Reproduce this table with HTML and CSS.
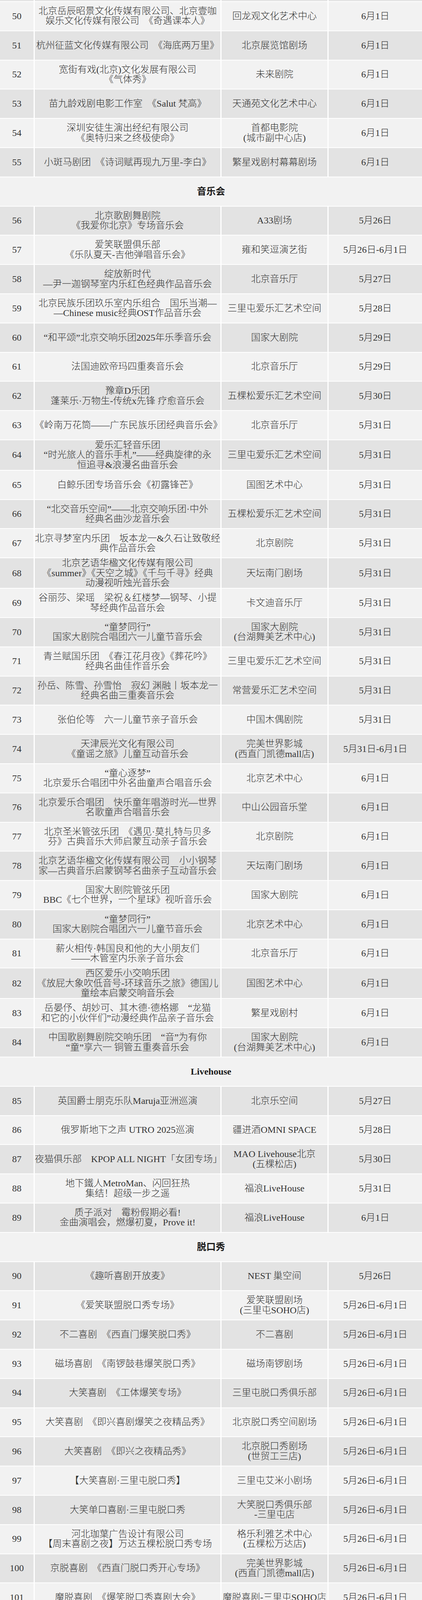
FILE: index.html
```html
<!DOCTYPE html>
<html lang="zh-CN">
<head>
<meta charset="utf-8">
<title>演出安排</title>
<link rel="stylesheet" href="styles.css">
</head>
<body>
<table class="sched">
<colgroup><col class="c1"><col class="c2"><col class="c3"><col class="c4"></colgroup>
<tbody>
<tr class="stub b"><td></td><td></td><td></td><td></td></tr>
<tr class="a"><td>50</td><td>北京岳辰昭景文化传媒有限公司、北京壹咖<br>娱乐文化传媒有限公司　《奇遇课本人》</td><td>回龙观文化艺术中心</td><td>6月1日</td></tr>
<tr class="b"><td>51</td><td>杭州征蓝文化传媒有限公司&ensp;《海底两万里》</td><td>北京展览馆剧场</td><td>6月1日</td></tr>
<tr class="a"><td>52</td><td>宽街有戏(北京)文化发展有限公司<br>《气体秀》</td><td>未来剧院</td><td>6月1日</td></tr>
<tr class="b"><td>53</td><td>苗九龄戏剧电影工作室　《Salut 梵高》</td><td>天通苑文化艺术中心</td><td>6月1日</td></tr>
<tr class="a"><td>54</td><td>深圳安徒生演出经纪有限公司<br>《奥特归来之终极使命》</td><td>首都电影院<br>(城市副中心店)</td><td>6月1日</td></tr>
<tr class="b"><td>55</td><td>小斑马剧团　《诗词赋再现九万里-李白》</td><td>繁星戏剧村幕幕剧场</td><td>6月1日</td></tr>
<tr class="sec"><td colspan="4">音乐会</td></tr>
<tr class="b"><td>56</td><td>北京歌剧舞剧院<br>《我爱你北京》专场音乐会</td><td>A33剧场</td><td>5月26日</td></tr>
<tr class="a"><td>57</td><td>爱笑联盟俱乐部<br>《乐队夏天-吉他弹唱音乐会》</td><td>雍和笑逗演艺街</td><td>5月26日-6月1日</td></tr>
<tr class="b"><td>58</td><td>绽放新时代<br>—尹一迦钢琴室内乐红色经典作品音乐会</td><td>北京音乐厅</td><td>5月27日</td></tr>
<tr class="a"><td>59</td><td>北京民族乐团玖乐室内乐组合　国乐当潮—<br>—Chinese music经典OST作品音乐会</td><td>三里屯爱乐汇艺术空间</td><td>5月28日</td></tr>
<tr class="b"><td>60</td><td>“和平颂”北京交响乐团2025年乐季音乐会</td><td>国家大剧院</td><td>5月29日</td></tr>
<tr class="a"><td>61</td><td>法国迪欧帝玛四重奏音乐会</td><td>北京音乐厅</td><td>5月29日</td></tr>
<tr class="b"><td>62</td><td>豫章D乐团<br>蓬莱乐·万物生-传统x先锋 疗愈音乐会</td><td>五棵松爱乐汇艺术空间</td><td>5月30日</td></tr>
<tr class="a"><td>63</td><td>《岭南万花筒——广东民族乐团经典音乐会》</td><td>北京音乐厅</td><td>5月31日</td></tr>
<tr class="b"><td>64</td><td>爱乐汇轻音乐团<br>“时光旅人的音乐手札”——经典旋律的永<br>恒追寻&amp;浪漫名曲音乐会</td><td>三里屯爱乐汇艺术空间</td><td>5月31日</td></tr>
<tr class="a"><td>65</td><td>白鲸乐团专场音乐会《初露锋芒》</td><td>国图艺术中心</td><td>5月31日</td></tr>
<tr class="b"><td>66</td><td>“北交音乐空间”——北京交响乐团·中外<br>经典名曲沙龙音乐会</td><td>五棵松爱乐汇艺术空间</td><td>5月31日</td></tr>
<tr class="a"><td>67</td><td>北京寻梦室内乐团　坂本龙一&amp;久石让致敬经<br>典作品音乐会</td><td>北京剧院</td><td>5月31日</td></tr>
<tr class="b"><td>68</td><td>北京艺语华楹文化传媒有限公司<br>《summer》《天空之城》《千与千寻》经典<br>动漫视听烛光音乐会</td><td>天坛南门剧场</td><td>5月31日</td></tr>
<tr class="a"><td>69</td><td>谷丽莎、梁瑶　梁祝＆红楼梦—钢琴、小提<br>琴经典作品音乐会</td><td>卡文迪音乐厅</td><td>5月31日</td></tr>
<tr class="b"><td>70</td><td>“童梦同行”<br>国家大剧院合唱团六一儿童节音乐会</td><td>国家大剧院<br>(台湖舞美艺术中心)</td><td>5月31日</td></tr>
<tr class="a"><td>71</td><td>青兰赋国乐团　《春江花月夜》《葬花吟》<br>经典名曲佳作音乐会</td><td>三里屯爱乐汇艺术空间</td><td>5月31日</td></tr>
<tr class="b"><td>72</td><td>孙岳、陈雪、孙雪怡　寂幻 渊融丨坂本龙一<br>经典名曲三重奏音乐会</td><td>常营爱乐汇艺术空间</td><td>5月31日</td></tr>
<tr class="a"><td>73</td><td>张伯伦等　六一儿童节亲子音乐会</td><td>中国木偶剧院</td><td>5月31日</td></tr>
<tr class="b"><td>74</td><td>天津辰光文化有限公司<br>《童谣之旅》儿童互动音乐会</td><td>完美世界影城<br>(西直门凯德mall店)</td><td>5月31日-6月1日</td></tr>
<tr class="a"><td>75</td><td>“童心逐梦”<br>北京爱乐合唱团中外名曲童声合唱音乐会</td><td>北京艺术中心</td><td>6月1日</td></tr>
<tr class="b"><td>76</td><td>北京爱乐合唱团　快乐童年唱游时光—世界<br>名歌童声合唱音乐会</td><td>中山公园音乐堂</td><td>6月1日</td></tr>
<tr class="a"><td>77</td><td>北京圣米管弦乐团　《遇见·莫扎特与贝多<br>芬》古典音乐大师启蒙互动亲子音乐会</td><td>北京剧院</td><td>6月1日</td></tr>
<tr class="b"><td>78</td><td>北京艺语华楹文化传媒有限公司　小小钢琴<br>家—古典音乐启蒙钢琴名曲亲子互动音乐会</td><td>天坛南门剧场</td><td>6月1日</td></tr>
<tr class="a"><td>79</td><td>国家大剧院管弦乐团<br>BBC《七个世界，一个星球》视听音乐会</td><td>国家大剧院</td><td>6月1日</td></tr>
<tr class="b"><td>80</td><td>“童梦同行”<br>国家大剧院合唱团六一儿童节音乐会</td><td>北京艺术中心</td><td>6月1日</td></tr>
<tr class="a"><td>81</td><td>薪火相传·韩国良和他的大小朋友们<br>——木管室内乐亲子音乐会</td><td>北京音乐厅</td><td>6月1日</td></tr>
<tr class="b"><td>82</td><td>西区爱乐小交响乐团<br>《放屁大象吹低音号-环球音乐之旅》德国儿<br>童绘本启蒙交响音乐会</td><td>国图艺术中心</td><td>6月1日</td></tr>
<tr class="a"><td>83</td><td>岳晏伃、胡妙可、其木德·德格娜　“龙猫<br>和它的小伙伴们”动漫经典作品亲子音乐会</td><td>繁星戏剧村</td><td>6月1日</td></tr>
<tr class="b"><td>84</td><td>中国歌剧舞剧院交响乐团　“音”为有你<br>“童”享六一 铜管五重奏音乐会</td><td>国家大剧院<br>(台湖舞美艺术中心)</td><td>6月1日</td></tr>
<tr class="sec"><td colspan="4">Livehouse</td></tr>
<tr class="b"><td>85</td><td>英国爵士朋克乐队Maruja亚洲巡演</td><td>北京乐空间</td><td>5月27日</td></tr>
<tr class="a"><td>86</td><td>俄罗斯地下之声 UTRO 2025巡演</td><td>疆进酒OMNI SPACE</td><td>5月28日</td></tr>
<tr class="b"><td>87</td><td>夜猫俱乐部　KPOP ALL NIGHT「女团专场」</td><td>MAO Livehouse北京<br>(五棵松店)</td><td>5月30日</td></tr>
<tr class="a"><td>88</td><td>地下鐵人MetroMan、闪回狂热<br>集结！超级一步之遥</td><td>福浪LiveHouse</td><td>5月31日</td></tr>
<tr class="b"><td>89</td><td>质子派对　霉粉假期必看!<br>金曲演唱会，燃爆初夏，Prove it!</td><td>福浪LiveHouse</td><td>6月1日</td></tr>
<tr class="sec"><td colspan="4">脱口秀</td></tr>
<tr class="b"><td>90</td><td>《趣听喜剧开放麦》</td><td>NEST 巢空间</td><td>5月26日</td></tr>
<tr class="a"><td>91</td><td>《爱笑联盟脱口秀专场》</td><td>爱笑联盟剧场<br>(三里屯SOHO店)</td><td>5月26日-6月1日</td></tr>
<tr class="b"><td>92</td><td>不二喜剧　《西直门爆笑脱口秀》</td><td>不二喜剧</td><td>5月26日-6月1日</td></tr>
<tr class="a"><td>93</td><td>磁场喜剧　《南锣鼓巷爆笑脱口秀》</td><td>磁场南锣剧场</td><td>5月26日-6月1日</td></tr>
<tr class="b"><td>94</td><td>大笑喜剧　《工体爆笑专场》</td><td>三里屯脱口秀俱乐部</td><td>5月26日-6月1日</td></tr>
<tr class="a"><td>95</td><td>大笑喜剧　《即兴喜剧爆笑之夜精品秀》</td><td>北京脱口秀空间剧场</td><td>5月26日-6月1日</td></tr>
<tr class="b"><td>96</td><td>大笑喜剧　《即兴之夜精品秀》</td><td>北京脱口秀剧场<br>(世贸工三店)</td><td>5月26日-6月1日</td></tr>
<tr class="a"><td>97</td><td>【大笑喜剧·三里屯脱口秀】</td><td>三里屯艾米小剧场</td><td>5月26日-6月1日</td></tr>
<tr class="b"><td>98</td><td>大笑单口喜剧·三里屯脱口秀</td><td>大笑脱口秀俱乐部<br>-三里屯店</td><td>5月26日-6月1日</td></tr>
<tr class="a"><td>99</td><td>河北珈葉广告设计有限公司<br>【周末喜剧之夜】万达五棵松脱口秀专场</td><td>格乐利雅艺术中心<br>(五棵松万达店)</td><td>5月26日-6月1日</td></tr>
<tr class="b"><td>100</td><td>京脱喜剧　《西直门脱口秀开心专场》</td><td>完美世界影城<br>(西直门凯德mall店)</td><td>5月26日-6月1日</td></tr>
<tr class="a"><td>101</td><td>魔脱喜剧　《爆笑脱口秀喜剧大会》</td><td>魔脱喜剧-三里屯SOHO店</td><td>5月26日-6月1日</td></tr>
</tbody>
</table>
</body>
</html>
```

FILE: styles.css
```css
html, body {
  margin: 0;
  padding: 0;
  background: #ffffff;
}

body {
  overflow-x: hidden;
}

.sched {
  border-collapse: separate;
  border-spacing: 3px 2px;
  table-layout: fixed;
  width: 1086px;
  margin: -2px 0 0 -3px;
  font-family: "Liberation Serif", "Noto Sans CJK SC", serif;
  font-size: 24px;
  font-weight: 300;
  line-height: 25.3px;
  color: #333333;
}

.c1 { width: 86px; }
.c2 { width: 475px; }
.c3 { width: 271px; }
.c4 { width: 239px; }

.sched td {
  height: 72.8px;
  padding: 0;
  text-align: center;
  vertical-align: middle;
  white-space: nowrap;
}

.sched tr.a td {
  background: #f2f2f2;
}

.sched tr.b td {
  background: #e3e3e3;
}

.sched tr.stub td {
  height: 3px;
  font-size: 0;
  line-height: 0;
}

.sched tr.sec td {
  background: #f2f2f2;
  font-weight: 700;
  color: #1a1a1a;
}
```
